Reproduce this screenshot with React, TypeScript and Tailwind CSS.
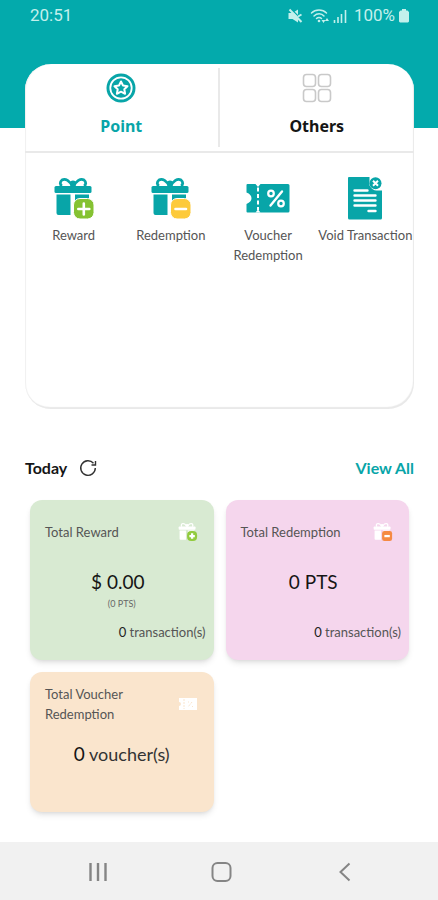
import { useState } from 'react';
import type { ReactNode } from 'react';

type TabName = 'Point' | 'Others';

function StatusBar() {
  return (
    <div className="flex h-8 items-center justify-between pr-7 pl-[30px] font-['Roboto',sans-serif] text-[17px] text-[#c3f0ec]">
      <span>20:51</span>
      <div className="flex items-center gap-[3px]">
        <svg className="h-4 w-4" viewBox="0 0 16 16" aria-hidden="true">
          <path d="M1.500 5h4L11 1.500v13L5.500 11h-4z" fill="currentColor" />
          <path d="M4.500 1.500l11 11" stroke="#03aaac" strokeWidth="1.400" />
          <path d="M2.500 1.500l12 12.500M11 8.500l3.500-2" stroke="currentColor" strokeWidth="2" />
        </svg>
        <svg className="ml-1 h-4 w-5" viewBox="0 0 20 16" aria-hidden="true">
          <g fill="none" stroke="currentColor" strokeWidth="1.500" strokeLinecap="round">
            <path d="M1.500 5c4-4 11-4 15 0" />
            <path d="M4 8c3-3 7.500-3 10 0" />
            <path d="M6.500 10.500c1.500-1.500 3.500-1.500 5 0" />
          </g>
          <circle cx="9" cy="13" r="1.300" fill="currentColor" />
          <path d="M11.500 12h4l-2 3zM15 13h4l-2-3z" fill="currentColor" />
        </svg>
        <svg className="h-4 w-[14px]" viewBox="0 0 14 16" aria-hidden="true">
          <path d="M1.500 12v3M5 9v6M8.500 6v9M12.500 2v13" stroke="currentColor" strokeWidth="1.600" />
        </svg>
        <span className="ml-1">100%</span>
        <svg className="h-4 w-3" viewBox="0 0 12 16" aria-hidden="true">
          <path d="M4 1h4v1.500h1.500l1.500 1.500v9.500l-1 1H2l-1-1V4l1.500-1.500H4z" fill="currentColor" />
        </svg>
      </div>
    </div>
  );
}

function PointIcon() {
  return (
    <svg className="size-8" viewBox="0 0 32 32" fill="none" aria-hidden="true">
      <circle cx="16" cy="16" r="14.500" fill="#08a5a8" />
      <circle cx="16" cy="16" r="10.700" stroke="white" strokeWidth="1.800" />
      <path
        d="M16 9.500l2 4 4.500.700-3.200 3.100.800 4.500-4.100-2.100-4.100 2.100.800-4.500-3.200-3.100 4.500-.700z"
        stroke="white"
        strokeWidth="2"
        strokeLinejoin="round"
      />
    </svg>
  );
}

function OthersIcon() {
  return (
    <svg className="size-8" viewBox="0 0 32 32" fill="none" stroke="#c9c9c9" strokeWidth="1.600" aria-hidden="true">
      <rect x="2.500" y="2.500" width="12" height="12" rx="3" />
      <rect x="17.500" y="2.500" width="12" height="12" rx="3" />
      <rect x="2.500" y="17.500" width="12" height="12" rx="3" />
      <rect x="17.500" y="17.500" width="12" height="12" rx="3" />
    </svg>
  );
}

function Gift() {
  return (
    <>
      <path d="M2.500 17.500h14V38h-12q-2 0-2-2zM21 17.500h14V36q0 2-2 2H21z" fill="currentColor" />
      <rect x="0.500" y="9" width="37" height="7" rx="1.500" fill="currentColor" />
      <path
        d="M18 9C16 4 11.500 1 8 3c-2.500 2-2 5 0 6M20 9C22 4 26.500 1 30 3c2.500 2 2 5 0 6"
        fill="none"
        stroke="currentColor"
        strokeWidth="2.800"
      />
      <circle cx="19" cy="6.500" r="3" fill="currentColor" />
    </>
  );
}

function RewardIcon() {
  return (
    <svg className="h-11 w-11 text-[#08a5a8]" viewBox="0 0 44 44" aria-hidden="true">
      <g transform="translate(2 0)">
        <Gift />
      </g>
      <rect x="21.500" y="21.500" width="20.500" height="20.500" rx="6.500" fill="#85c232" stroke="white" />
      <path d="M31.800 26.500v11M26.300 32h11" stroke="white" strokeWidth="2.600" strokeLinecap="round" />
    </svg>
  );
}

function RedemptionIcon() {
  return (
    <svg className="h-11 w-11 text-[#08a5a8]" viewBox="0 0 44 44" aria-hidden="true">
      <g transform="translate(2 0)">
        <Gift />
      </g>
      <rect x="21.500" y="21.500" width="20.500" height="20.500" rx="6.500" fill="#fdca3b" stroke="white" />
      <path d="M26.500 32h10.500" stroke="white" strokeWidth="2.600" strokeLinecap="round" />
    </svg>
  );
}

function VoucherIcon() {
  return (
    <svg className="h-11 w-11" viewBox="0 0 44 44" fill="none" aria-hidden="true">
      <path d="M1.500 7H42q1.500 0 1.500 1.500V34q0 1.500-1.500 1.500H1.500q-1 0-1-1V27q5-2 5-5.700t-5-5.700V8q0-1 1-1z" fill="#08a5a8" />
      <path d="M12 10.500v4M12 17v4M12 23.500v4M12 30v3" stroke="white" strokeWidth="2" />
      <path d="M9.500 7h5L12 10zM9.500 35.500h5l-2.500-3z" fill="white" />
      <path d="M36 14.500l-11.500 14" stroke="white" strokeWidth="2.400" strokeLinecap="round" />
      <circle cx="25" cy="16.500" r="2.800" stroke="white" strokeWidth="2.200" />
      <circle cx="35" cy="26.500" r="2.800" stroke="white" strokeWidth="2.200" />
    </svg>
  );
}

function VoidIcon() {
  return (
    <svg className="h-11 w-11" viewBox="0 0 44 44" fill="none" aria-hidden="true">
      <path d="M6 0h20.500v8.500q3 5 7 5H39V41q0 1.500-1.500 1.500h-31Q5 42.500 5 41V1q0-1 1-1z" fill="#08a5a8" />
      <circle cx="32.500" cy="6.200" r="6" fill="#08a5a8" />
      <path d="M30 3.700l5 5M35 3.700l-5 5" stroke="white" strokeWidth="2" />
      <path d="M11.500 13.500h13M11.500 18.500h21M11.500 23.500h21M11.500 28.500h21M25.500 34h7" stroke="white" strokeWidth="2.400" strokeLinecap="round" />
    </svg>
  );
}

function SmallGift({ badge }: { badge: 'plus' | 'minus' }) {
  return (
    <svg className="h-5 w-5 text-white" viewBox="0 0 44 44" aria-hidden="true">
      <g transform="translate(1 1)">
        <Gift />
      </g>
      <rect
        x="20"
        y="20"
        width="22"
        height="22"
        rx={badge === 'plus' ? 9 : 5}
        fill={badge === 'plus' ? '#92cb3e' : '#f58a43'}
      />
      {badge === 'plus' ? (
        <path d="M31 25v12M25 31h12" stroke="white" strokeWidth="5" />
      ) : (
        <path d="M25 31h12" stroke="white" strokeWidth="5" />
      )}
    </svg>
  );
}

function SmallVoucher() {
  return (
    <svg className="h-5 w-5" viewBox="0 0 20 20" aria-hidden="true">
      <path d="M1 4h18v12H1v-4a2 2 0 0 0 0-4z" fill="white" />
      <path d="M6 5v10M14 8l-4 5M10 8h1M14 12.500h1" stroke="#fae5cd" strokeDasharray="2 1" />
    </svg>
  );
}

const actions = [
  { label: 'Reward', Icon: RewardIcon },
  { label: 'Redemption', Icon: RedemptionIcon },
  { label: 'Voucher Redemption', Icon: VoucherIcon },
  { label: 'Void Transaction', Icon: VoidIcon },
];

const tabs: { name: TabName; Icon: () => ReactNode }[] = [
  { name: 'Point', Icon: PointIcon },
  { name: 'Others', Icon: OthersIcon },
];

function SummaryHeader({ title, icon }: { title: string; icon: ReactNode }) {
  return (
    <div className="flex items-center justify-between">
      <h3 className="w-28 text-[13px] leading-5 text-[#555555]">{title}</h3>
      {icon}
    </div>
  );
}

export default function App() {
  const [activeTab, setActiveTab] = useState<TabName>('Point');

  return (
    <div className="flex min-h-screen flex-col bg-white font-['Lato',sans-serif] text-[#151515]">
      <header className="h-32 bg-[#03aaac]">
        <StatusBar />
      </header>

      <main className="flex-1 pr-6 pb-7 pl-[25px]">
        <section className="-mt-16 min-h-[345px] overflow-hidden rounded-[26px] bg-white shadow-[inset_-1px_-2px_1px_#e9e9e9,inset_1px_0_1px_#f0f0f0]">
          <div className="grid h-[89px] grid-cols-2 border-b-2 border-[#e9e9e9] font-['Noto_Sans',sans-serif]">
            {tabs.map(({ name, Icon }) => (
              <button
                key={name}
                type="button"
                onClick={() => setActiveTab(name)}
                className={`my-1 flex flex-col items-center gap-[10px] pt-1 text-base leading-6 font-bold first:border-r-2 first:border-[#e9e9e9] ${
                  activeTab === name ? 'text-[#08a5a8]' : 'text-[#151515]'
                }`}
              >
                <Icon />
                {name}
              </button>
            ))}
          </div>
          <div className="grid grid-cols-4 pt-6">
            {actions.map(({ label, Icon }) => (
              <button
                key={label}
                type="button"
                className="flex flex-col items-center gap-1 text-[13px] leading-5 text-[#555555]"
              >
                <Icon />
                {label}
              </button>
            ))}
          </div>
        </section>

        <div className="mt-[47px] flex h-6 items-center justify-between text-base font-bold">
          <div className="flex items-center gap-3">
            <h2>Today</h2>
            <button type="button" aria-label="Refresh">
              <svg className="size-[18px]" viewBox="0 0 18 18" fill="none" stroke="#333333" strokeWidth="1.400" aria-hidden="true">
                <path d="M16.300 9A7.300 7.300 0 1 1 14.500 4.200" />
                <path d="M16.500 2v4h-4" />
              </svg>
            </button>
          </div>
          <a href="#all" className="text-[#08a5a8]">
            View All
          </a>
        </div>

        <div className="mt-5 grid grid-cols-2 gap-3 px-[5px]">
          <article className="flex h-40 flex-col rounded-xl bg-[#d8ead2] px-2 pt-[22px] shadow-md">
            <div className="pr-2 pl-[7px]">
              <SummaryHeader title="Total Reward" icon={<SmallGift badge="plus" />} />
            </div>
            <p className="mt-7 pr-2 text-center text-[19px] leading-6">$ 0.00</p>
            <p className="text-center text-[9px] leading-5 text-[#666666]">(0 PTS)</p>
            <p className="mt-2 text-right text-[13px] leading-5 text-[#555555]">
              <span className="text-[#222222]">0</span> transaction(s)
            </p>
          </article>

          <article className="flex h-40 flex-col rounded-xl bg-[#f5d6ed] px-2 pt-[22px] shadow-md">
            <div className="pr-2 pl-[7px]">
              <SummaryHeader title="Total Redemption" icon={<SmallGift badge="minus" />} />
            </div>
            <p className="mt-7 pr-2 text-center text-[19px] leading-6">0 PTS</p>
            <p className="mt-7 text-right text-[13px] leading-5 text-[#555555]">
              <span className="text-[#222222]">0</span> transaction(s)
            </p>
          </article>

          <article className="flex h-[140px] flex-col rounded-xl bg-[#fae5cd] px-2 pt-3 shadow-md">
            <div className="pr-2 pl-[7px]">
              <SummaryHeader title="Total Voucher Redemption" icon={<SmallVoucher />} />
            </div>
            <p className="mt-[18px] text-center text-lg leading-6 text-[#333333]">
              <span className="text-[19px] text-[#151515]">0</span> voucher(s)
            </p>
          </article>
        </div>
      </main>

      <nav className="flex h-[58px] items-center justify-around bg-[#f1f1f1] pr-8 pl-9 text-[#858585]">
        <button type="button" aria-label="Recent apps">
          <svg className="size-6" viewBox="0 0 24 24" stroke="currentColor" strokeWidth="2.400" aria-hidden="true">
            <path d="M4.500 4v18M12 4v18M19.500 4v18" />
          </svg>
        </button>
        <button type="button" aria-label="Home">
          <svg className="size-6" viewBox="0 0 24 24" fill="none" stroke="currentColor" strokeWidth="2" aria-hidden="true">
            <rect x="3.500" y="4" width="18" height="18" rx="5" />
          </svg>
        </button>
        <button type="button" aria-label="Back">
          <svg className="size-6" viewBox="0 0 24 24" fill="none" stroke="currentColor" strokeWidth="2" aria-hidden="true">
            <path d="M17.500 4.500L8.500 13l9 8.500" />
          </svg>
        </button>
      </nav>
    </div>
  );
}
